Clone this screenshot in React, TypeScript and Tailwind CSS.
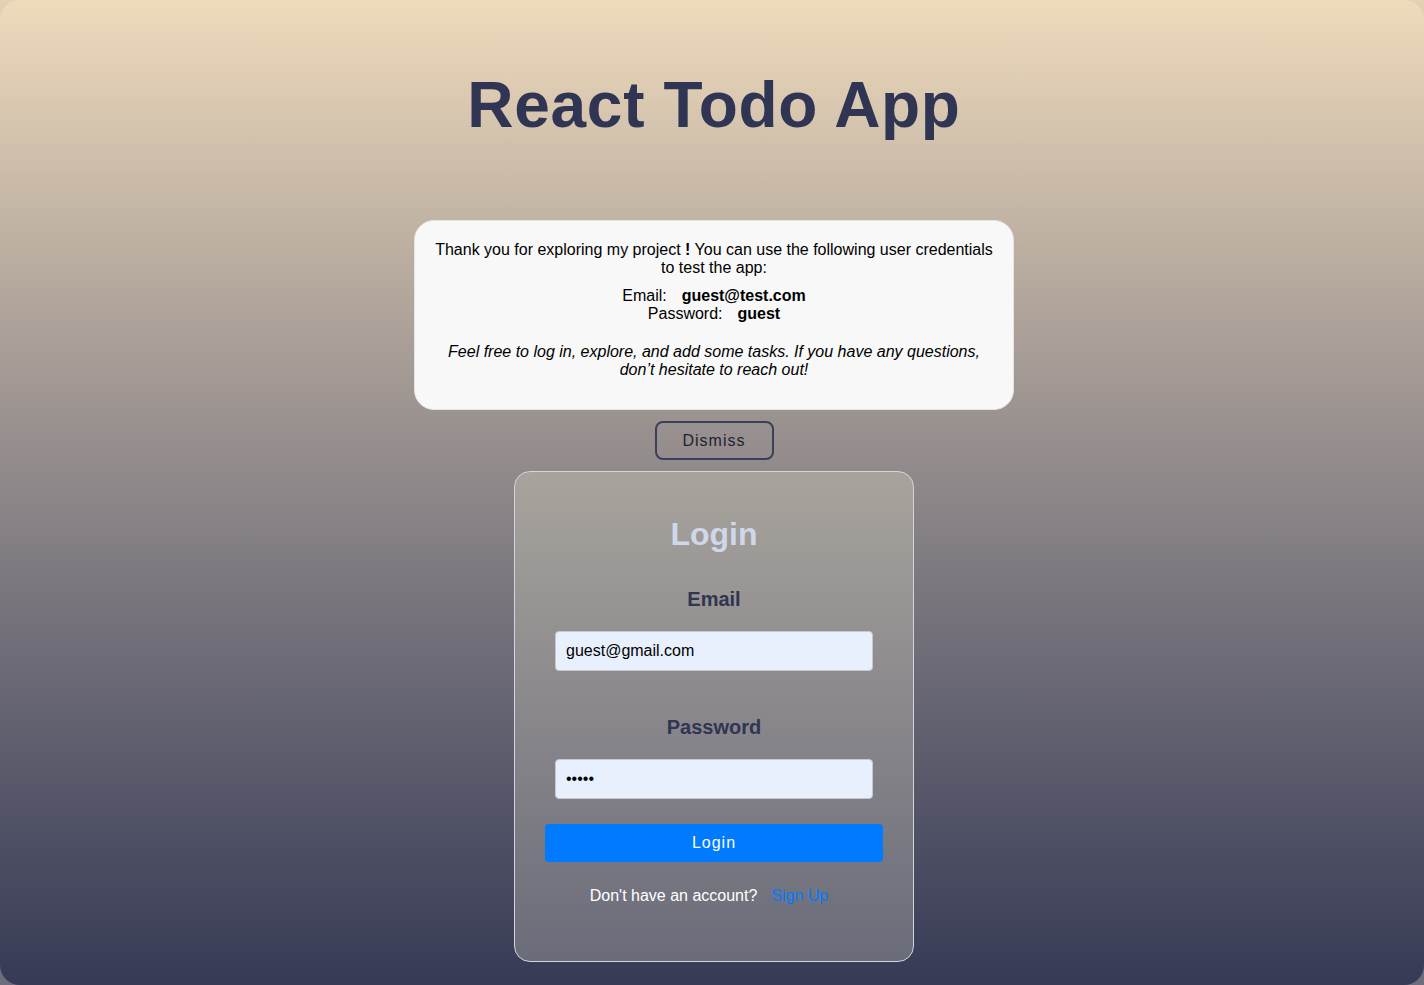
import React from "react";

const font = { fontFamily: '"Liberation Sans", Arial, sans-serif' };

function InfoBox() {
  return (
    <div className="w-[600px] rounded-[20px] border border-[#e4e4e4] bg-[#f8f8f8] px-5 pt-[20px] pb-[30px] text-center text-[16px] leading-[18px] text-black">
      <p>
        Thank you for exploring my project <b>!</b> You can use the following user credentials to
        test the app:
      </p>
      <div className="mt-[10px]">
        <div>
          Email:<b className="ml-[15px]">guest@test.com</b>
        </div>
        <div>
          Password:<b className="ml-[15px]">guest</b>
        </div>
      </div>
      <p className="mt-[20px] italic">
        Feel free to log in, explore, and add some tasks. If you have any questions, don’t hesitate
        to reach out!
      </p>
    </div>
  );
}

function LoginCard() {
  return (
    <div className="w-[400px] h-[491px] rounded-[16px] border border-[#d4d4dc] bg-gradient-to-b from-[#a8a39c] to-[#6b6c7a] px-[30px] pt-[44px] flex flex-col items-center">
      <h2 className="text-[32px] leading-[37px] font-bold text-[#cfd8e8]">Login</h2>
      <label className="mt-[35px] text-[20px] leading-[23px] font-bold text-[#2f3552]">Email</label>
      <input
        readOnly
        value="guest@gmail.com"
        className="mt-[20px] w-[318px] h-[40px] rounded-[4px] border border-[#c8c8cc] bg-[#e8f0fe] px-[10px] text-[16px] text-black outline-none"
        style={font}
      />
      <label className="mt-[45px] text-[20px] leading-[23px] font-bold text-[#2f3552]">
        Password
      </label>
      <input
        readOnly
        type="password"
        value="guest"
        className="mt-[20px] w-[318px] h-[40px] rounded-[4px] border border-[#c8c8cc] bg-[#e8f0fe] px-[10px] text-[16px] text-black outline-none"
        style={font}
      />
      <button className="mt-[25px] w-[338px] h-[38px] rounded-[4px] bg-[#007bff] text-[16px] tracking-[1px] text-white">
        Login
      </button>
      <p className="mt-[25px] pr-[10px] text-[16px] leading-[18px] text-white">
        Don't have an account?
        <a className="ml-[14px] text-[#007bff]">Sign Up</a>
      </p>
    </div>
  );
}

export default function App() {
  return (
    <div className="w-full h-[985px] bg-gradient-to-b from-[#e3d1b3] to-[#6c6c7c]" style={font}>
      <div className="h-[985px] rounded-[20px] bg-gradient-to-b from-[#efdabb] to-[#363a55] pl-[4px] flex flex-col items-center">
        <h1 className="mt-[68px] text-[64px] leading-[74px] font-bold tracking-[0.7px] text-[#2f3552]">
          React Todo App
        </h1>
        <div className="mt-[78px]">
          <InfoBox />
        </div>
        <button className="mt-[11px] w-[119px] h-[39px] rounded-[8px] border-2 border-[#3a3f5c] text-[16px] tracking-[1px] text-[#1e2235]">
          Dismiss
        </button>
        <div className="mt-[11px]">
          <LoginCard />
        </div>
      </div>
    </div>
  );
}
